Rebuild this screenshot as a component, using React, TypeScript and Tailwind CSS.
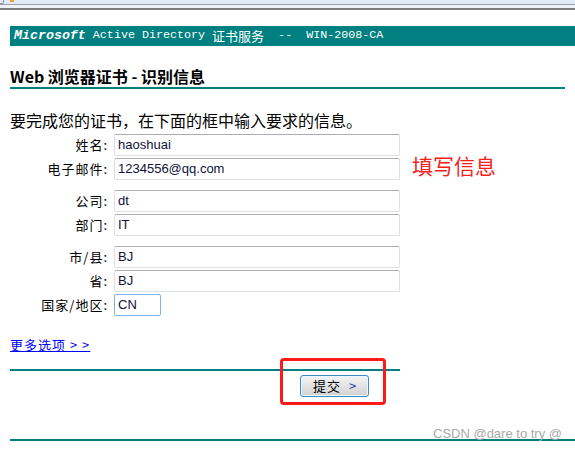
import React from "react";

const cjk = "font-['SimSun','Noto_Sans_CJK_SC',sans-serif]";

function Field({ label, value, narrow }: { label: string; value: string; narrow?: boolean }) {
    return (
        <div className="flex items-center h-[22px]">
            <div className={`w-[98px] text-right text-[13px] tracking-[1px] text-black ${cjk}`}>{label}</div>
            <div
                className={`ml-[6px] h-[22px] ${narrow ? "w-[47px] border-[#7eb4ea]" : "w-[286px] border-[#dcdfe3] border-t-[#abadb3]"} border rounded-[2px] bg-white flex items-center px-[3px]`}
            >
                <span className="font-['Liberation_Sans',Arial,sans-serif] text-[13px] text-[#10103a]">{value}</span>
            </div>
        </div>
    );
}

export default function App() {
    return (
        <div className="relative w-[575px] h-[451px] bg-white overflow-hidden">
            {/* browser chrome strip */}
            <div className="h-[5px] bg-[#e1ebf7] border-b border-[#9aa3ad]" />
            <div className="h-[3px] bg-[#eef3f9]" />
            <div className="h-[2px] bg-[#7d7d7d]" />
            <div className="absolute left-0 top-0 w-[4px] h-[4px] border-r border-b border-[#8a96a4] rounded-br-[2px]" />
            <div className="absolute left-[10px] top-0 w-[4px] h-[2px] bg-[#f0a030]" />

            {/* header bar */}
            <div className="mt-[16px] ml-[10px] h-[20px] bg-[#008080] pl-[4px] flex items-center text-white font-['Liberation_Mono','DejaVu_Sans_Mono',monospace] whitespace-pre">
                <span className="font-bold italic text-[13.3px]">Microsoft</span>
                <span className="text-[11.7px]"> Active Directory </span>
                <span className={`text-[13px] ${cjk}`}>证书服务</span>
                <span className="text-[11.7px]">  --  WIN-2008-CA</span>
            </div>

            <div className="mx-[10px]">
                <div className={`mt-[20px] pb-[1px] leading-[20px] text-[16px] font-bold text-black border-b-2 border-[#008080] ${cjk}`}>
                    Web 浏览器证书 - 识别信息
                </div>

                <p className={`mt-[20px] leading-[22px] text-[16px] text-black ${cjk}`}>
                    要完成您的证书，在下面的框中输入要求的信息。
                </p>

                <div className="relative mt-[3px] flex flex-col gap-[10px]">
                    <div className="flex flex-col gap-[2px]">
                        <Field label="姓名:" value="haoshuai" />
                        <Field label="电子邮件:" value="1234556@qq.com" />
                    </div>
                    <div className="flex flex-col gap-[2px]">
                        <Field label="公司:" value="dt" />
                        <Field label="部门:" value="IT" />
                    </div>
                    <div className="flex flex-col gap-[2px]">
                        <Field label="市/县:" value="BJ" />
                        <Field label="省:" value="BJ" />
                        <Field label="国家/地区:" value="CN" narrow />
                    </div>
                    <div className={`absolute left-[402px] top-[19px] text-[21px] leading-[24px] text-[#f5221b] ${cjk}`}>
                        填写信息
                    </div>
                </div>

                <div className="mt-[16px] h-[16px]">
                    <a className={`text-[13px] leading-[16px] tracking-[1px] text-[#0000ff] underline ${cjk}`}>更多选项 &gt; &gt;</a>
                </div>

                <div className="mt-[21px] w-[390px] h-[2px] bg-[#008080]" />

                <div className="mt-[4px] w-[390px] flex">
                    <button className={`ml-[290px] w-[69px] h-[22px] rounded-[3px] border border-[#3c8dc5] bg-gradient-to-b from-[#f4f4f4] to-[#d2d2d2] shadow-[inset_0_0_0_1px_#eaf6fd] text-[13px] text-black flex items-center justify-center ${cjk}`}>
                        <span className="tracking-[1px]">提交</span>
                        <span className="ml-[8px] text-[#1c3f9e]">&gt;</span>
                    </button>
                </div>

                <div className="mt-[42px] h-[2px] bg-[#008080] mr-[-10px]" />
            </div>

            {/* annotation box */}
            <div className="absolute left-[280px] top-[358px] w-[106px] h-[47px] border-[3px] border-[#ff1a1a] rounded-[4px]" />

            {/* watermark */}
            <div className="absolute left-[433px] top-[426px] text-[13px] leading-[15px] text-[#a9a9a9] font-['Liberation_Sans',Arial,sans-serif]">
                CSDN @dare to try @
            </div>
        </div>
    );
}
